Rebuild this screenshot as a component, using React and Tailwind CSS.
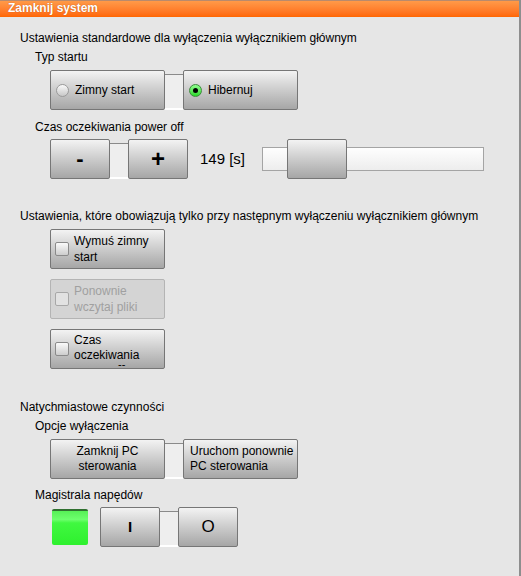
import React from "react";

const btn =
  "border border-[#767676] rounded-[2px] bg-gradient-to-b from-[#f3f3f3] to-[#a6a6a6] text-black";

const Radio = ({ checked }) => (
  <span
    className={
      "inline-flex items-center justify-center w-[13px] h-[13px] rounded-full border " +
      (checked
        ? "border-[#3c8a3c] bg-gradient-to-b from-[#8dff8d] to-[#22d822]"
        : "border-[#9a9a9a] bg-gradient-to-b from-[#fafafa] to-[#c8c8c8]")
    }
  >
    {checked && <span className="w-[5px] h-[5px] rounded-full bg-black" />}
  </span>
);

const Check = ({ disabled }) => (
  <span
    className={
      "shrink-0 w-[14px] h-[14px] rounded-[2px] border " +
      (disabled
        ? "border-[#a8a8a8] bg-[#e2e2e2]"
        : "border-[#8a8a8a] bg-gradient-to-b from-[#fafafa] to-[#cdcdcd]")
    }
  />
);

// szary łącznik między przyciskami w grupie
const Joint = () => (
  <div className="w-[18px] h-[36px] mt-[4px] border-t border-[#8a8a8a] border-b-2 border-b-white bg-[#eeeeee]" />
);

const Label = ({ children, indent }) => (
  <div className={"h-[15px] leading-[15px] text-[12px] " + (indent ? "pl-[15px]" : "")}>
    {children}
  </div>
);

export default function App() {
  return (
    <div
      className="w-[521px] h-[576px] bg-[#e6e6e6] border-r-2 border-[#8e8e8e] overflow-hidden text-black"
      style={{ fontFamily: "Tahoma, 'Liberation Sans', Arial, sans-serif" }}
    >
      <div className="h-[17px] border-t border-[#b98a6c] bg-gradient-to-b from-[#ff9a48] to-[#ff6600] pl-[8px] text-[12px] leading-[15px] font-bold text-white [text-shadow:0_0_1px_#b34700]">
        Zamknij system
      </div>

      <div className="pl-[20px]">
        <div className="mt-[14px]">
          <Label>Ustawienia standardowe dla wyłączenia wyłącznikiem głównym</Label>
        </div>
        <div className="mt-[4px]">
          <Label indent>Typ startu</Label>
        </div>
        <div className="mt-[5px] ml-[30px] flex">
          <button className={btn + " w-[115px] h-[40px] flex items-center gap-[6px] pl-[5px] text-[12px]"}>
            <Radio />
            <span>Zimny start</span>
          </button>
          <Joint />
          <button className={btn + " w-[115px] h-[40px] flex items-center gap-[6px] pl-[5px] text-[12px]"}>
            <Radio checked />
            <span>Hibernuj</span>
          </button>
        </div>

        <div className="mt-[10px]">
          <Label indent>Czas oczekiwania power off</Label>
        </div>
        <div className="mt-[4px] ml-[30px] flex items-center">
          <button className={btn + " w-[60px] h-[40px] text-[22px] font-bold leading-none"}>-</button>
          <Joint />
          <button className={btn + " w-[60px] h-[40px] text-[24px] font-bold leading-none"}>+</button>
          <span className="ml-[12px] w-[62px] text-[15px]">149 [s]</span>
          <div className="relative w-[222px] h-[24px] border border-[#a4a4a4] bg-gradient-to-b from-[#fefefe] to-[#ededed]">
            <div
              className={btn + " absolute top-[-9px] w-[60px] h-[40px] from-[#e6e6e6] to-[#959595]"}
              style={{ left: 24 }}
            />
          </div>
        </div>

        <div className="mt-[30px]">
          <Label>Ustawienia, które obowiązują tylko przy następnym wyłączeniu wyłącznikiem głównym</Label>
        </div>
        <div className="mt-[5px] ml-[30px] flex flex-col gap-[10px]">
          <button className={btn + " w-[115px] h-[40px] flex items-center gap-[5px] pl-[4px] text-[12px] text-left leading-[16px] overflow-hidden"}>
            <Check />
            <span>
              Wymuś zimny
              <br />
              start
            </span>
          </button>
          <button className="w-[115px] h-[40px] flex items-center gap-[5px] pl-[4px] text-[12px] text-left leading-[16px] border border-[#b4b4b4] rounded-[2px] bg-[#d4d4d4] text-[#a0a0a0]">
            <Check disabled />
            <span>
              Ponownie
              <br />
              wczytaj pliki
            </span>
          </button>
          <button className={btn + " relative w-[115px] h-[40px] flex items-center gap-[5px] pl-[4px] text-[12px] text-left leading-[15px] overflow-hidden"}>
            <Check />
            <span className="mb-[3px]">
              Czas
              <br />
              oczekiwania
            </span>
            <span className="absolute left-[67px] bottom-0 h-[8px] text-[11px] leading-[8px]">--</span>
          </button>
        </div>

        <div className="mt-[31px]">
          <Label>Natychmiastowe czynności</Label>
        </div>
        <div className="mt-[4px]">
          <Label indent>Opcje wyłączenia</Label>
        </div>
        <div className="mt-[5px] ml-[30px] flex">
          <button className={btn + " w-[115px] h-[40px] text-[12px] leading-[15px] text-center"}>
            Zamknij PC
            <br />
            sterowania
          </button>
          <Joint />
          <button className={btn + " w-[115px] h-[40px] text-[12px] leading-[15px] text-left pl-[6px] whitespace-nowrap"}>
            Uruchom ponownie
            <br />
            PC sterowania
          </button>
        </div>

        <div className="mt-[9px]">
          <Label indent>Magistrala napędów</Label>
        </div>
        <div className="mt-[4px] ml-[30px] flex items-start">
          <div className="mt-[2px] ml-[2px] w-[36px] h-[36px] rounded-[2px] border-t-2 border-[#2f6f2f] bg-[linear-gradient(to_bottom,#57f057_0%,#6dff6d_25%,#40f840_35%,#2ef02e_100%)]" />
          <button className={btn + " ml-[12px] w-[60px] h-[40px] text-[15px] font-bold"}>I</button>
          <Joint />
          <button className={btn + " w-[60px] h-[40px] text-[17px]"}>O</button>
        </div>
      </div>
    </div>
  );
}
